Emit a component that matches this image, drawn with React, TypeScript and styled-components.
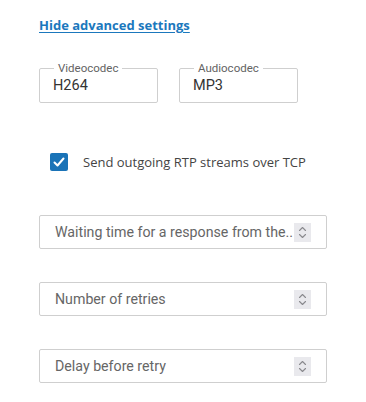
import React from "react";
import styled, { createGlobalStyle } from "styled-components";

const Global = createGlobalStyle`
  html, body { margin: 0; padding: 0; background: #ffffff; }
  * { box-sizing: border-box; }
`;

const Page = styled.div`
  width: 366px;
  height: 402px;
  padding: 16px 0 0 39px;
  display: flex;
  flex-direction: column;
  font-family: "Roboto", "Liberation Sans", sans-serif;
`;

const ToggleLink = styled.a`
  font-family: "Open Sans", "Noto Sans", sans-serif;
  font-weight: 700;
  font-size: 13px;
  line-height: 18px;
  color: #1b78bd;
  text-decoration: underline;
  text-underline-offset: 2px;
  align-self: flex-start;
  cursor: pointer;
`;

const CodecRow = styled.div`
  display: flex;
  gap: 21px;
  margin-top: 33px;
`;

const Fieldset = styled.fieldset`
  width: 119px;
  height: 41px;
  margin: 0;
  padding: 0 0 0 14px;
  border: 1px solid #cfcfcf;
  border-radius: 2px;
  position: relative;
  top: -5px;
`;

const Legend = styled.legend`
  font-size: 11.5px;
  line-height: 12px;
  color: #636363;
  padding: 0 4px;
  margin-left: 0;
`;

const CodecValue = styled.div`
  font-size: 14.5px;
  line-height: 18px;
  color: #333333;
  margin-left: -1px;
  margin-top: 3px;
`;

const CheckRow = styled.label`
  display: flex;
  align-items: center;
  gap: 15px;
  margin-top: 45px;
  margin-left: 11px;
  height: 18px;
`;

const Box = styled.span`
  width: 18px;
  height: 18px;
  border-radius: 2px;
  background: #1a73b7;
  display: flex;
  align-items: center;
  justify-content: center;
`;

const CheckText = styled.span`
  font-family: "Open Sans", "Noto Sans", sans-serif;
  font-size: 13px;
  color: #444444;
`;

const NumberField = styled.div<{ $top: number }>`
  width: 288px;
  height: 34px;
  margin-top: ${(p) => p.$top}px;
  border: 1px solid #cfcfcf;
  border-radius: 2px;
  display: flex;
  align-items: center;
  padding: 0 15px;
`;

const FieldText = styled.span`
  flex: 1;
  min-width: 0;
  font-size: 14.2px;
  color: #666666;
  white-space: nowrap;
  overflow: hidden;
`;

const Spinner = styled.span`
  width: 17px;
  height: 19px;
  background: #e9e9ed;
  display: flex;
  align-items: center;
  justify-content: center;
  flex-shrink: 0;
`;

const SpinIcon = () => (
  <svg width="11" height="15" viewBox="0 0 11 15" fill="none" stroke="#8a8a8e" strokeWidth="1.1" strokeLinecap="round" strokeLinejoin="round">
    <path d="M2.5 5.5 L5.5 2.5 L8.5 5.5" />
    <path d="M2.5 9.5 L5.5 12.5 L8.5 9.5" />
  </svg>
);

const Field = ({ text, top }: { text: string; top: number }) => (
  <NumberField $top={top}>
    <FieldText>{text}</FieldText>
    <Spinner>
      <SpinIcon />
    </Spinner>
  </NumberField>
);

export default function App() {
  return (
    <>
      <Global />
      <Page>
        <ToggleLink>Hide advanced settings</ToggleLink>
        <CodecRow>
          <Fieldset>
            <Legend>Videocodec</Legend>
            <CodecValue>H264</CodecValue>
          </Fieldset>
          <Fieldset>
            <Legend>Audiocodec</Legend>
            <CodecValue>MP3</CodecValue>
          </Fieldset>
        </CodecRow>
        <CheckRow>
          <Box>
            <svg width="14" height="14" viewBox="0 0 14 14" fill="none" stroke="#fff" strokeWidth="2" strokeLinecap="round" strokeLinejoin="round">
              <path d="M2.5 7.5 L5.5 10.5 L11.5 3.5" />
            </svg>
          </Box>
          <CheckText>Send outgoing RTP streams over TCP</CheckText>
        </CheckRow>
        <Field text="Waiting time for a response from the.." top={44} />
        <Field text="Number of retries" top={33} />
        <Field text="Delay before retry" top={33} />
      </Page>
    </>
  );
}
